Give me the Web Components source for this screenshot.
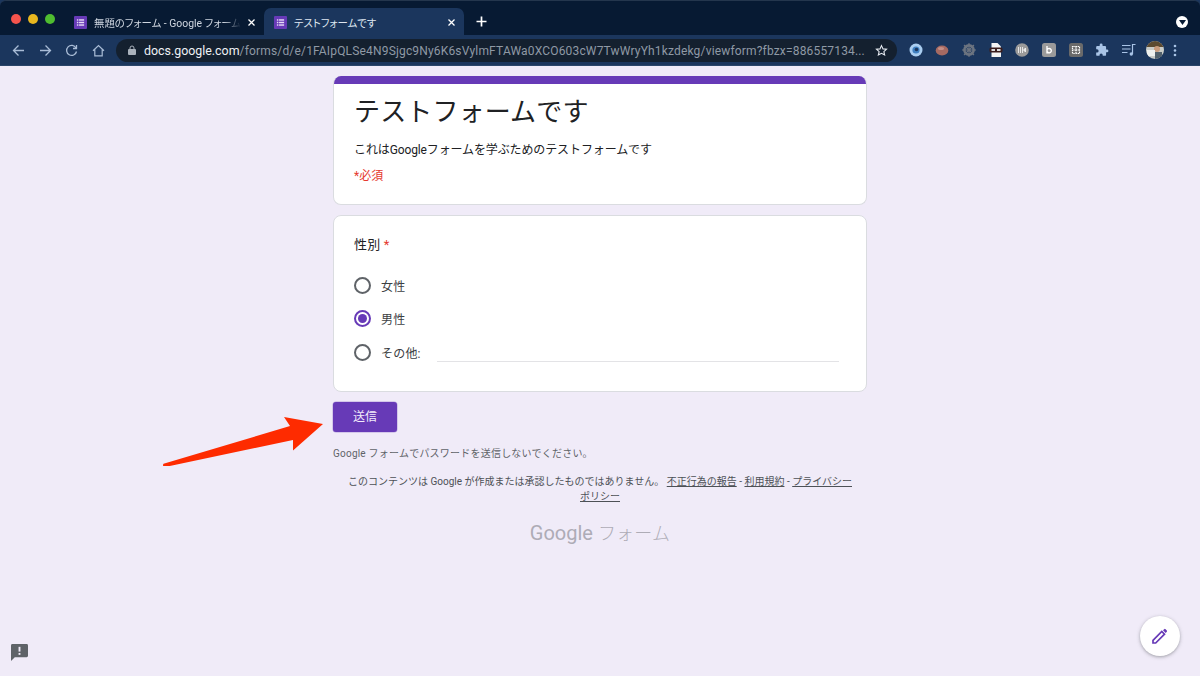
<!DOCTYPE html>
<html lang="ja"><head><meta charset="utf-8"><title>テストフォームです</title>
<style>
html,body{margin:0;height:100%;background:#f0ebf8;overflow:hidden}
body{width:1200px;height:676px;font-family:Roboto,"Noto Sans CJK JP",sans-serif;display:flex;flex-direction:column}
</style></head><body>
<browser-frame>
  <browser-tab slot="tabs" title-text="無題のフォーム - Google フォーム"></browser-tab>
  <browser-tab slot="tabs" active title-text="テストフォームです"></browser-tab>
</browser-frame>
<form-page>
  <form-card></form-card>
  <form-question></form-question>
  <form-footer></form-footer>
</form-page>
<script>
const def=(n,html)=>customElements.define(n,class extends HTMLElement{
  constructor(){super();this.attachShadow({mode:'open'}).innerHTML=html}
});
const ICON=`<svg width="18" height="18" viewBox="0 0 18 18"><rect width="18" height="18" rx="1.500" fill="#673ab7"/><g fill="#e6dcf6"><rect x="4" y="4.500" width="2" height="2"/><rect x="7" y="4.500" width="7" height="2"/><rect x="4" y="8" width="2" height="2"/><rect x="7" y="8" width="7" height="2"/><rect x="4" y="11.500" width="2" height="2"/><rect x="7" y="11.500" width="7" height="2"/></g></svg>`;
customElements.define('browser-tab',class extends HTMLElement{
  connectedCallback(){
    if(this.shadowRoot)return;
    const active=this.hasAttribute('active');
    this.attachShadow({mode:'open'}).innerHTML=`<style>
    :host{display:flex;align-items:center;box-sizing:border-box;width:200px;height:28px;margin-top:7px;padding:0 8px 0 10px;font:10.400px Roboto,"Noto Sans CJK JP",sans-serif;font-feature-settings:"palt";border-radius:7px 7px 0 0;position:relative;background:${active?'#1b365d':'transparent'};color:${active?'#dfe6f0':'#cfd6e0'}}
    .ic{flex:none;width:13px;height:13px;margin-right:7px;display:flex}
    .ic svg{width:13px;height:13px}
    .t{flex:1;white-space:nowrap;overflow:hidden;${active?'':'-webkit-mask-image:linear-gradient(90deg,#000 88%,transparent);mask-image:linear-gradient(90deg,#000 88%,transparent)'}}
    svg.x{flex:none;margin-left:6px}
    </style><span class="ic">${ICON}</span><span class="t">${this.getAttribute('title-text')}</span>
    <svg class="x" width="9" height="9" viewBox="0 0 9 9"><path d="M1.500 1.500l6 6M7.500 1.500l-6 6" stroke="#fff" stroke-width="1.300"/></svg>`;
  }
});
def('browser-frame',`<style>
:host{display:block;flex:none;height:66px;background:#1b365d;box-shadow:inset 0 -1px 0 #2a4569}
.strip{height:35px;background:#071a33;display:flex;box-sizing:border-box;border-top:1px solid #24364d;border-radius:6px 6px 0 0}
.lights{display:flex;gap:7px;padding:12.500px 0 0 11px;width:53px;flex:none}
.lights i{width:10px;height:10px;border-radius:50%}
.tabs{display:flex}
.plus{margin:14px 0 0 11px}
.sp{flex:1}
.menu{margin:15px 12px 0 0;width:12px;height:12px;border-radius:50%;background:#fff;display:flex;align-items:center;justify-content:center}
.bar{height:30px;display:flex;align-items:center;padding:0 0 0 12px}
.nav{display:flex;align-items:center;flex:none}
.nav svg{display:block;margin-right:13.500px}
.url{flex:none;margin-left:-2px;width:781px;height:23px;background:#14202f;border-radius:12px;display:flex;align-items:center;box-sizing:border-box;padding:0 9px 0 12px;font:12px Roboto,sans-serif;white-space:nowrap;color:#8f99a5}
.url b{font-weight:400;color:#eef1f5;font-size:12.400px;letter-spacing:0}
.url .txt{flex:1;min-width:0;margin-left:8px;letter-spacing:.17px}
.exts{display:flex;align-items:center;margin-left:11px}
.e{width:15px;height:15px;margin-right:11.700px;flex:none;display:flex;align-items:center;justify-content:center}
</style>
<div class="strip">
 <div class="lights"><i style="background:#f5544d"></i><i style="background:#e8b71f"></i><i style="background:#4fbd30"></i></div>
 <div class="tabs"><slot name="tabs"></slot></div>
 <svg class="plus" width="13" height="13" viewBox="0 0 13 13"><path d="M6.500 1.500v10M1.500 6.500h10" stroke="#fff" stroke-width="1.700"/></svg>
 <div class="sp"></div>
 <div class="menu"><svg width="7" height="5" viewBox="0 0 7 5"><path d="M0 0h7L3.500 5z" fill="#071a33"/></svg></div>
</div>
<div class="bar">
 <div class="nav">
  <svg width="13" height="13" viewBox="0 0 13 13" fill="none" stroke="#a9bcd6" stroke-width="1.300"><path d="M12 6.500H1.500M6.500 1.500l-5 5 5 5"/></svg>
  <svg width="13" height="13" viewBox="0 0 13 13" fill="none" stroke="#a9bcd6" stroke-width="1.300"><path d="M1 6.500h10.500M6.500 1.500l5 5-5 5"/></svg>
  <svg width="13" height="13" viewBox="0 0 13 13" fill="none" stroke="#a9bcd6" stroke-width="1.300"><path d="M11 4A5 5 0 1 0 11.500 7.500"/><path d="M11.500 1v3.500H8"/></svg>
  <svg width="13" height="13" viewBox="0 0 13 13" fill="none" stroke="#a9bcd6" stroke-width="1.200"><path d="M1 6.800L6.500 1.500 12 6.800M2.800 5.500v6.300h7.400V5.500"/></svg>
 </div>
 <div class="url">
  <svg width="8" height="10" viewBox="0 0 8 10"><rect y="4" width="8" height="6" rx="1" fill="#aab2bc"/><path d="M2 4.500V3a2 2 0 0 1 4 0v1.500" fill="none" stroke="#aab2bc" stroke-width="1"/></svg>
  <span class="txt"><b>docs.google.com</b>/forms/d/e/1FAIpQLSe4N9Sjgc9Ny6K6sVylmFTAWa0XCO603cW7TwWryYh1kzdekg/viewform?fbzx=886557134...</span>
  <svg width="13" height="13" viewBox="0 0 24 24" fill="none" stroke="#e6eaf0" stroke-width="2"><path d="M12 3l2.800 6 6.500.7-4.900 4.300 1.400 6.400L12 17.100l-5.800 3.300 1.400-6.400L2.700 9.700 9.200 9z"/></svg>
 </div>
 <div class="exts">
  <span class="e"><svg width="14" height="14" viewBox="0 0 14 14"><circle cx="7" cy="7" r="6.500" fill="#a9cdf0"/><circle cx="7" cy="7" r="3.600" fill="#3f7fc0"/><circle cx="7.500" cy="6.500" r="1.800" fill="#1b365d"/></svg></span>
  <span class="e"><svg width="14" height="14" viewBox="0 0 14 14"><ellipse cx="7" cy="7.500" rx="6.300" ry="5" fill="#a66a62"/><ellipse cx="6" cy="5.500" rx="3" ry="1.500" fill="#c58f87"/></svg></span>
  <span class="e"><svg width="14" height="14" viewBox="0 0 14 14"><circle cx="7" cy="7" r="4.600" fill="none" stroke="#6c7480" stroke-width="2.600"/><path d="M7 0v14M0 7h14M2 2l10 10M12 2L2 12" stroke="#6c7480" stroke-width="1.100"/></svg></span>
  <span class="e"><svg width="14" height="14" viewBox="0 0 14 14"><path d="M2.500 0h6L12 3.500V14H2.500z" fill="#f4f4f4"/><rect x="0.500" y="4.500" width="13" height="5" rx="1.500" fill="#3a1d1d"/><rect x="2.500" y="6" width="3.500" height="2" fill="#ddd"/><rect x="8" y="6" width="3.500" height="2" fill="#ddd"/></svg></span>
  <span class="e"><svg width="14" height="14" viewBox="0 0 14 14"><circle cx="7" cy="7" r="6.800" fill="#9a9a9a"/><path d="M3.500 4v6M5.500 4v6M7.500 4v6M10.500 5L8.500 7l2 2z" stroke="#eee" fill="#eee" stroke-width=".9"/></svg></span>
  <span class="e"><svg width="14" height="14" viewBox="0 0 14 14"><rect width="14" height="14" rx="2.500" fill="#9a9a9a"/><path d="M5 3v7.500M5 7a2.200 2.200 0 1 1 0 1.300" stroke="#fff" stroke-width="1.400" fill="none"/></svg></span>
  <span class="e"><svg width="14" height="14" viewBox="0 0 14 14"><rect width="14" height="14" rx="2.500" fill="#6a6a6a"/><path d="M3.500 3.500h7v7h-7zM7 3.500v7M3.500 7h7" stroke="#fff" stroke-width="1.200" fill="none" stroke-dasharray="1.200 .6"/></svg></span>
  <span class="e"><svg width="14" height="14" viewBox="0 0 24 24" fill="#a9c4e6"><path d="M20.500 11H19V7a2 2 0 0 0-2-2h-4V3.500a2.500 2.500 0 0 0-5 0V5H4a2 2 0 0 0-2 2v3.800h1.500a2.700 2.700 0 0 1 0 5.400H2V20a2 2 0 0 0 2 2h3.800v-1.500a2.700 2.700 0 0 1 5.400 0V22H17a2 2 0 0 0 2-2v-4h1.500a2.500 2.500 0 0 0 0-5z"/></svg></span>
  <span class="e"><svg width="14" height="14" viewBox="0 0 14 14" fill="none" stroke="#a9c4e6" stroke-width="1.200"><path d="M0 2.500h8.500M0 6h8.500M0 9.500h5.500"/><circle cx="9.300" cy="11" r="1.700" fill="#a9c4e6" stroke="none"/><path d="M10.500 11V1.500h3"/></svg></span>
  <span class="e" style="width:18px;height:18px;margin:0 9px 0 -2px;border-radius:50%;overflow:hidden"><svg width="18" height="18" viewBox="0 0 18 18"><rect width="18" height="18" fill="#c9ccc8"/><rect width="18" height="6" fill="#5c4a30"/><circle cx="11" cy="8" r="3" fill="#c99b7c"/><rect x="1" y="9" width="8" height="6" fill="#eef0ee"/><rect x="9" y="11" width="7" height="7" fill="#51606b"/></svg></span>
  <svg width="4" height="13" viewBox="0 0 4 13" fill="#a9c4e6"><circle cx="2" cy="2" r="1.300"/><circle cx="2" cy="6.500" r="1.300"/><circle cx="2" cy="11" r="1.300"/></svg>
 </div>
</div>`);
def('form-page',`<style>
:host{display:block;flex:1;position:relative;background:#f0ebf8;overflow:hidden;border-radius:0 0 6px 6px}
.col{width:534px;margin:10px auto 0;display:flex;flex-direction:column;gap:10px}
.arrow{position:absolute;left:0;top:0;pointer-events:none}
.fab{position:absolute;left:1140px;top:550px;width:40px;height:40px;border-radius:50%;background:#fff;box-shadow:0 1px 3px rgba(60,64,67,.35),0 1px 5px rgba(60,64,67,.12);display:flex;align-items:center;justify-content:center}
.rep{position:absolute;left:11px;top:578px}
</style>
<div class="col"><slot></slot></div>
<svg class="arrow" width="340" height="400" viewBox="0 66 340 400"><path d="M163.500 463.800L290 426 284 417 323 424 293 450.500 293 440 165 467Q162 466 163.500 463.800z" fill="#fe2b00"/></svg>
<div class="fab"><svg width="18" height="18" viewBox="0 0 18 18"><path d="M2 13.300V16h2.700L13.500 7.200 10.800 4.500z" fill="none" stroke="#673ab7" stroke-width="1.700"/><path d="M12 3.300l1.200-1.100a1 1 0 0 1 1.400 0l1.200 1.200a1 1 0 0 1 0 1.400L14.700 6z" fill="#673ab7"/></svg></div>
<svg class="rep" width="17" height="17" viewBox="0 0 18 18"><path d="M1.500 0h15A1.500 1.500 0 0 1 18 1.500v11a1.500 1.500 0 0 1-1.500 1.500H4l-4 4V1.500A1.500 1.500 0 0 1 1.500 0z" fill="#5f6368"/><rect x="8" y="3" width="2" height="5" fill="#f0ebf8"/><rect x="8" y="9.500" width="2" height="2" fill="#f0ebf8"/></svg>`);
def('form-card',`<style>
:host{display:block;box-sizing:border-box;height:129px;background:#fff;border:1px solid #dadce0;border-top:0;border-radius:8px;position:relative;overflow:hidden}
.top{height:8px;background:#673ab7;margin:0 -1px}
.in{padding:7px 20px 0}
h1{margin:0;font:400 26px/38px "Noto Sans CJK JP",sans-serif;color:#202124;letter-spacing:.15px;height:38px}
p{margin:12px 0 0;font:12px/18px Roboto,"Noto Sans CJK JP",sans-serif;color:#202124;letter-spacing:-.12px}
.req{margin-top:8px;font:12px/18px Roboto,"Noto Sans CJK JP",sans-serif;color:#e5392e}
</style><div class="top"></div><div class="in"><h1>テストフォームです</h1><p>これはGoogleフォームを学ぶためのテストフォームです</p><div class="req">*必須</div></div>`);
customElements.define('form-radio',class extends HTMLElement{
  connectedCallback(){
    if(this.shadowRoot)return;
    const on=this.hasAttribute('checked');
    this.attachShadow({mode:'open'}).innerHTML=`<style>
    :host{display:flex;align-items:center;height:33.500px}
    .r{box-sizing:border-box;width:17px;height:17px;border-radius:50%;border:2px solid ${on?'#673ab7':'#5f6368'};display:flex;align-items:center;justify-content:center;flex:none;margin-right:10px}
    .r i{width:9px;height:9px;border-radius:50%;background:#673ab7;display:${on?'block':'none'}}
    span{font:12px Roboto,"Noto Sans CJK JP",sans-serif;color:#3c4043;letter-spacing:.2px;flex:none}
    .line{flex:1;height:1px;background:#e3e3e6;margin:19px 27px 0 16px}
    </style><div class="r"><i></i></div><span><slot></slot></span>${this.hasAttribute('other')?'<div class="line"></div>':''}`;
  }
});
def('form-question',`<style>
:host{display:block;box-sizing:border-box;height:177px;background:#fff;border:1px solid #dadce0;border-radius:8px;padding:20px 0 0 20px}
.q{font:13px/18px Roboto,"Noto Sans CJK JP",sans-serif;color:#202124;letter-spacing:.2px}
.q em{font-style:normal;color:#e5392e}
.opts{margin-top:14.700px}
</style><div class="q">性別 <em>*</em></div>
<div class="opts"><form-radio>女性</form-radio><form-radio checked>男性</form-radio><form-radio other>その他:</form-radio></div>`);
def('form-footer',`<style>
:host{display:block;font:10px/15px Roboto,"Noto Sans CJK JP",sans-serif;color:#4d5156}
.btn{width:64px;height:30px;background:#673ab7;color:#f2ecfb;border-radius:3px;font-size:12px;display:flex;align-items:center;justify-content:center;box-shadow:0 0 0 .5px rgba(103,58,183,.4)}
.note{margin-top:14px;letter-spacing:.22px;color:#5f6368}
.legal{margin-top:13px;text-align:center}
.logo{margin-top:16px;text-align:center;color:#aeacb6;font:400 20px/26px Roboto,"Noto Sans CJK JP",sans-serif}
.logo span{font-weight:300;font-size:18px;letter-spacing:.2px}
</style><div class="btn">送信</div>
<div class="note">Google フォームでパスワードを送信しないでください。</div>
<div class="legal">このコンテンツは Google が作成または承認したものではありません。 <u>不正行為の報告</u> - <u>利用規約</u> - <u>プライバシー</u><br><u>ポリシー</u></div>
<div class="logo">Google <span>フォーム</span></div>`);
</script>
</body></html>
